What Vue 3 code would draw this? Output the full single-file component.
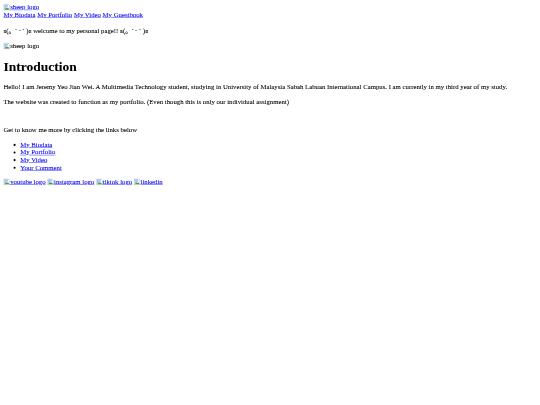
<script setup>
const navLinks = ['My Biodata', 'My Portfolio', 'My Video', 'My Guestbook']
const listLinks = ['My Biodata', 'My Portfolio', 'My Video', 'Your Comment']
const socials = ['youtube logo', 'instagram logo', 'tiktok logo', 'linkedin']
const face = 'ʚ(｡\u00A0\u2006ˊ ᵕ ˋ )ɞ'
</script>

<template>
  <div class="viewport">
    <div class="page">
      <a href="#">
        <svg class="broken-icon" viewBox="0 0 16 16">
          <path d="M1 1h10l4 4v10H1z" fill="#fff" stroke="#8a8a8a" />
          <path d="M2 2h8.5v6L7 9 2 13z" fill="#a9c4f5" />
          <path d="M2 14l5-5 2 2 2-2 3 5z" fill="#3f9f4a" />
        </svg>sheep logo
      </a>
      <nav>
        <template v-for="(link, i) in navLinks" :key="link">
          <a href="#">{{ link }}</a>{{ i < navLinks.length - 1 ? ' ' : '' }}
        </template>
      </nav>
      <p>{{ face }} welcome to my personal page!! {{ face }}</p>
      <div>
        <svg class="broken-icon" viewBox="0 0 16 16">
          <path d="M1 1h10l4 4v10H1z" fill="#fff" stroke="#8a8a8a" />
          <path d="M2 2h8.5v6L7 9 2 13z" fill="#a9c4f5" />
          <path d="M2 14l5-5 2 2 2-2 3 5z" fill="#3f9f4a" />
        </svg>sheep logo
      </div>
      <h1>Introduction</h1>
      <p>Hello! I am Jeremy Yeo Jian Wei. A Multimedia Technology student, studying in University of Malaysia Sabah Labuan International Campus. I am currently in my third year of my study.</p>
      <p>The website was created to function as my portfolio. (Even though this is only our individual assignment)</p>
      <p>&nbsp;</p>
      <p>Get to know me more by clicking the links below</p>
      <ul>
        <li v-for="link in listLinks" :key="link"><a href="#">{{ link }}</a></li>
      </ul>
      <p>
        <template v-for="name in socials" :key="name">
          <a href="#">
            <svg class="broken-icon" viewBox="0 0 16 16">
              <path d="M1 1h10l4 4v10H1z" fill="#fff" stroke="#8a8a8a" />
              <path d="M2 2h8.5v6L7 9 2 13z" fill="#a9c4f5" />
              <path d="M2 14l5-5 2 2 2-2 3 5z" fill="#3f9f4a" />
            </svg>{{ name }}
          </a>{{ ' ' }}
        </template>
      </p>
    </div>
  </div>
</template>

<style scoped>
/* the page was laid out for 1280px wide and shrunk to fit */
.viewport {
  width: 540px;
  height: 405px;
  overflow: hidden;
}

.page {
  width: 1280px;
  box-sizing: border-box;
  padding: 8px;
  font-family: "Liberation Serif", "Noto Sans CJK JP", serif;
  font-size: 16px;
  color: #000;
  -webkit-text-stroke: 0.15px;
  transform: scale(0.421875);
  transform-origin: 0 0;
  filter: blur(0.7px);
}

a {
  color: #0000ee;
}

p {
  margin: 16px 0;
}

h1 {
  font-size: 32px;
  font-weight: bold;
  margin: 21.44px 0;
}

ul {
  margin: 16px 0;
  padding-left: 40px;
}

.broken-icon {
  width: 16px;
  height: 16px;
  vertical-align: -3px;
}
</style>

<style>
body {
  background: #fff;
}
</style>
